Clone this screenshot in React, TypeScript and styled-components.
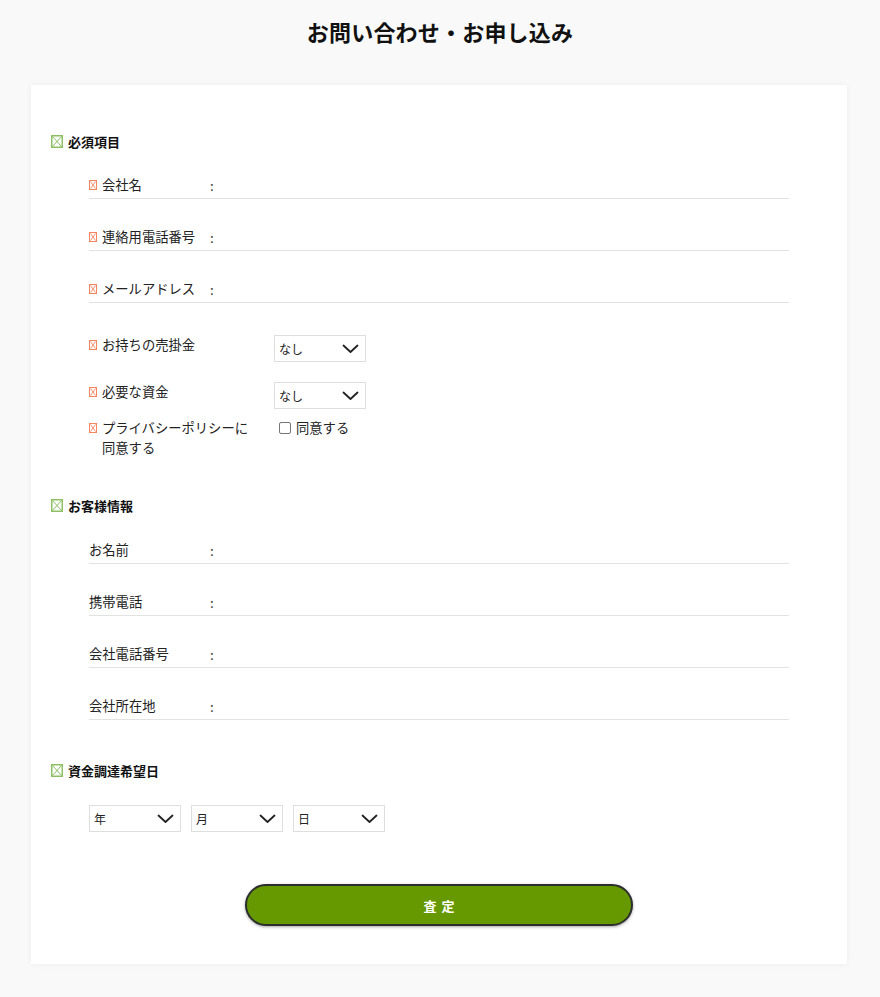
import React from "react";
import styled, { createGlobalStyle } from "styled-components";

const Global = createGlobalStyle`
  html, body { margin: 0; padding: 0; background: #f9f9f9; }
  body { font-family: "Noto Sans CJK JP", "Noto Sans", sans-serif; color: #222; }
`;

const Page = styled.div`
  padding: 16px 0 33px;
`;

const Title = styled.h1`
  margin: 0;
  text-align: center;
  font-size: 22px;
  line-height: 30px;
  font-weight: 700;
  color: #111;
  letter-spacing: 0.2px;
`;

const Card = styled.form`
  width: 816px;
  box-sizing: border-box;
  margin: 39px 0 0 31px;
  background: #fff;
  box-shadow: 0 0 6px rgba(0, 0, 0, 0.06);
  padding: 46px 20px 38px;
  display: flex;
  flex-direction: column;
`;

const SectionHeader = styled.div<{ $top?: number }>`
  display: flex;
  align-items: center;
  gap: 5px;
  height: 20px;
  font-size: 13px;
  font-weight: 700;
  color: #111;
  margin-top: ${(p) => p.$top ?? 0}px;
`;

const RowList = styled.div<{ $top: number }>`
  margin: ${(p) => p.$top}px 38px 0;
  display: flex;
  flex-direction: column;
  gap: 28px;
`;

const TextRow = styled.div`
  display: flex;
  align-items: center;
  height: 20px;
  padding-bottom: 3px;
  border-bottom: 1px solid #e2e2e2;
  font-size: 13.3px;
`;

const Label = styled.div<{ $w: number }>`
  display: flex;
  align-items: flex-start;
  width: ${(p) => p.$w}px;
  flex: none;
  line-height: 20px;
  font-size: 13.3px;
  color: #222;
`;

const IconSlot = styled.span`
  display: inline-flex;
  width: 13px;
  height: 20px;
  align-items: center;
  flex: none;
`;

const Colon = styled.span`
  width: 10px;
  color: #333;
`;

const Input = styled.input`
  flex: 1;
  border: none;
  outline: none;
  background: transparent;
  font: inherit;
  height: 20px;
  padding: 0;
`;

const SelectRow = styled.div<{ $top: number }>`
  display: flex;
  align-items: flex-start;
  margin: ${(p) => p.$top}px 38px 0;
`;

const SelectBox = styled.div`
  position: relative;
  width: 92px;
  height: 27px;
  box-sizing: border-box;
  border: 1px solid #dedede;
  background: #fff;
  display: flex;
  align-items: center;
  padding-left: 4px;
  font-size: 12px;
  color: #222;
  svg {
    position: absolute;
    right: 6px;
    top: 8px;
  }
`;

const CheckWrap = styled.label`
  display: flex;
  align-items: center;
  gap: 5px;
  margin-left: 5px;
  line-height: 20px;
  font-size: 13.3px;
  color: #222;
`;

const Check = styled.span`
  width: 10px;
  height: 10px;
  border: 1px solid #777;
  border-radius: 2px;
  background: #fff;
  display: inline-block;
`;

const DateRow = styled.div`
  display: flex;
  gap: 10px;
  margin: 25px 38px 0;
`;

const ButtonRow = styled.div`
  display: flex;
  justify-content: center;
  margin-top: 52px;
`;

const Submit = styled.button`
  width: 388px;
  height: 42px;
  border-radius: 21px;
  border: 2px solid #2e2e2e;
  background: #669900;
  color: #fff;
  font-family: inherit;
  font-size: 13px;
  font-weight: 700;
  letter-spacing: 5px;
  text-indent: 5px;
  box-shadow: 0 1px 3px rgba(0, 0, 0, 0.35);
  cursor: pointer;
`;

const GreenMark = () => (
  <svg width="12" height="13" viewBox="0 0 12 13">
    <rect x="0.75" y="0.75" width="10.5" height="11.5" fill="none" stroke="#8dc063" strokeWidth="1.5" />
    <path d="M1.5 1.5 L10.5 11.5 M10.5 1.5 L1.5 11.5" stroke="#8dc063" strokeWidth="1" />
  </svg>
);

const RedMark = () => (
  <svg width="8" height="10" viewBox="0 0 8 10">
    <rect x="0.5" y="0.5" width="7" height="9" fill="none" stroke="#f4865f" strokeWidth="1" />
    <path d="M1.5 1.5 L6.5 8.5 M6.5 1.5 L1.5 8.5" stroke="#f4865f" strokeWidth="0.9" />
  </svg>
);

const Chevron = () => (
  <svg width="17" height="10" viewBox="0 0 17 10">
    <path d="M1.5 1.5 L8.5 8 L15.5 1.5" fill="none" stroke="#222" strokeWidth="1.8" strokeLinecap="round" strokeLinejoin="round" />
  </svg>
);

const Select = ({ value }: { value: string }) => (
  <SelectBox>
    {value}
    <Chevron />
  </SelectBox>
);

const Field = ({ label, required }: { label: string; required?: boolean }) => (
  <TextRow>
    <Label $w={121}>
      {required && (
        <IconSlot>
          <RedMark />
        </IconSlot>
      )}
      <span>{label}</span>
    </Label>
    <Colon>:</Colon>
    <Input />
  </TextRow>
);

export default function App() {
  return (
    <>
      <Global />
      <Page>
        <Title>お問い合わせ・お申し込み</Title>
        <Card onSubmit={(e) => e.preventDefault()}>
          <SectionHeader>
            <GreenMark />
            必須項目
          </SectionHeader>
          <RowList $top={24}>
            <Field label="会社名" required />
            <Field label="連絡用電話番号" required />
            <Field label="メールアドレス" required />
          </RowList>

          <SelectRow $top={32}>
            <Label $w={185}>
              <IconSlot>
                <RedMark />
              </IconSlot>
              <span>お持ちの売掛金</span>
            </Label>
            <Select value="なし" />
          </SelectRow>
          <SelectRow $top={20}>
            <Label $w={185}>
              <IconSlot>
                <RedMark />
              </IconSlot>
              <span>必要な資金</span>
            </Label>
            <Select value="なし" />
          </SelectRow>
          <SelectRow $top={9}>
            <Label $w={185}>
              <IconSlot>
                <RedMark />
              </IconSlot>
              <span>
                プライバシーポリシーに
                <br />
                同意する
              </span>
            </Label>
            <CheckWrap>
              <Check />
              同意する
            </CheckWrap>
          </SelectRow>

          <SectionHeader $top={37}>
            <GreenMark />
            お客様情報
          </SectionHeader>
          <RowList $top={25}>
            <Field label="お名前" />
            <Field label="携帯電話" />
            <Field label="会社電話番号" />
            <Field label="会社所在地" />
          </RowList>

          <SectionHeader $top={40}>
            <GreenMark />
            資金調達希望日
          </SectionHeader>
          <DateRow>
            <Select value="年" />
            <Select value="月" />
            <Select value="日" />
          </DateRow>

          <ButtonRow>
            <Submit type="submit">査定</Submit>
          </ButtonRow>
        </Card>
      </Page>
    </>
  );
}
